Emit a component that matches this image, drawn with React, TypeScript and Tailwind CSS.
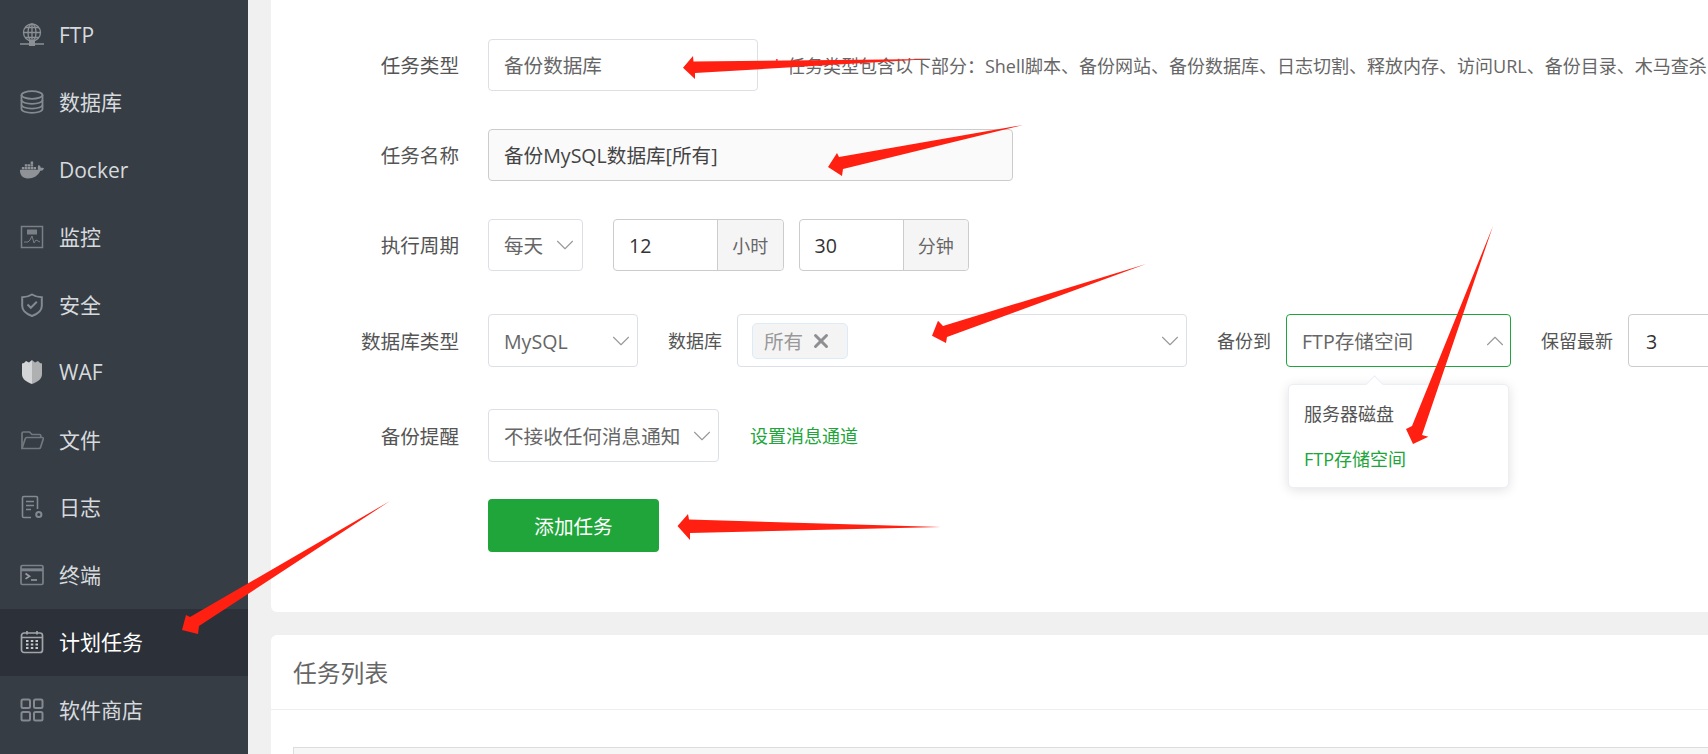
import { ChevronDown, ChevronUp, X } from "lucide-react";
import { FaDocker } from "react-icons/fa";
import type { ReactNode } from "react";

const font = "font-['Open_Sans','Noto_Sans_CJK_SC',sans-serif]";

function Ftp() {
  return (
    <svg viewBox="0 0 24 24" className="h-[24px] w-[24px]" fill="none" stroke="#8b9095" strokeWidth="1.300">
      <circle cx="12" cy="9.500" r="8.500" />
      <ellipse cx="12" cy="9.500" rx="4" ry="8.500" />
      <path d="M12 1v17M3.500 9.500h17M5 4.500h14M5 14.500h14" />
      <path d="M0 21h24" strokeWidth="1.500" />
      <rect x="9" y="18" width="6" height="5" fill="#8b9095" stroke="none" />
    </svg>
  );
}

function Db() {
  return (
    <svg viewBox="0 0 24 24" className="h-[24px] w-[24px]" fill="none" stroke="#858a90" strokeWidth="1.800">
      <ellipse cx="12" cy="5" rx="10.500" ry="3.800" />
      <path d="M1.500 5v14c0 2.200 4.700 3.800 10.500 3.800s10.500-1.600 10.500-3.800V5" />
      <path d="M1.500 10c0 2.200 4.700 3.800 10.500 3.800s10.500-1.600 10.500-3.800M1.500 14.800c0 2.200 4.700 3.800 10.500 3.800s10.500-1.600 10.500-3.800" />
    </svg>
  );
}

function Monitor() {
  return (
    <svg viewBox="0 0 24 24" className="h-[24px] w-[24px]" fill="none" stroke="#7b8086" strokeWidth="1.500">
      <rect x="1.500" y="1.500" width="21" height="21" />
      <rect x="7" y="4.500" width="10" height="5" fill="#7b8086" stroke="none" />
      <path d="M4 17h4l2-2 2-4 2 7 2-3 4 2" strokeWidth="1" />
    </svg>
  );
}

function Shield() {
  return (
    <svg viewBox="0 0 24 24" className="h-[24px] w-[24px]" fill="none" stroke="#858a90" strokeWidth="2">
      <path d="M12 1.500c3 1.800 6 2.700 9.800 2.800v8.700c0 4.400-3.800 7.800-9.800 10-6-2.200-9.800-5.600-9.800-10V4.300C6 4.200 9 3.300 12 1.500z" />
      <path d="M7.500 11.500l3.300 3.300 6-6" />
    </svg>
  );
}

function Waf() {
  return (
    <svg viewBox="0 0 24 24" className="h-[24px] w-[24px]">
      <path d="M12 0l3 2.500 3-1.500 2 2 2 .5v11c0 4.500-4.500 7.500-10 9.500z" fill="#aeb0b2" />
      <path d="M12 0L9 2.500 6 1 4 3l-2 .5v11c0 4.500 4.500 7.500 10 9.500z" fill="#d4d5d6" />
    </svg>
  );
}

function Folder() {
  return (
    <svg viewBox="0 0 24 24" className="h-[24px] w-[24px]" fill="none" stroke="#73787e" strokeWidth="1.700">
      <path d="M2 20.500V5.500C2 4.500 2.700 4 3.500 4h6l2.500 2.500h7.500c.8 0 1.300.5 1.300 1.300V9.500" />
      <path d="M2 20.500l3.300-10c.2-.7.7-1 1.400-1h15.600c.8 0 1.200.6 1 1.300l-2.800 8.700c-.2.700-.7 1-1.400 1z" />
    </svg>
  );
}

function Log() {
  return (
    <svg viewBox="0 0 24 24" className="h-[24px] w-[24px]" fill="none" stroke="#858a90" strokeWidth="1.600">
      <path d="M11 22.500H3.800c-.7 0-1.300-.6-1.300-1.300V2.800c0-.7.600-1.300 1.300-1.300h12.400c.7 0 1.300.6 1.300 1.300V14" />
      <path d="M6 6.500h8M6 10.500h8M6 14.500h5" />
      <circle cx="18.800" cy="19.500" r="2.600" strokeWidth="2" />
    </svg>
  );
}

function Terminal() {
  return (
    <svg viewBox="0 0 24 24" className="h-[24px] w-[24px]" fill="none" stroke="#7d8288" strokeWidth="1.700">
      <rect x="1" y="2.500" width="22" height="19" rx="1.500" />
      <path d="M1 6.800h22" strokeWidth="3" />
      <path d="M5.500 10.500l4 2.700-4 2.700M11 17h6" stroke="#9a9ea3" />
    </svg>
  );
}

function Calendar() {
  return (
    <svg viewBox="0 0 24 24" className="h-[24px] w-[24px]" fill="none" stroke="#a2a5a9" strokeWidth="1.700">
      <rect x="1.500" y="3" width="21" height="19.500" rx="2.500" />
      <path d="M1.500 7.500h21M7 1v3.500M17 1v3.500" />
      <path d="M6 11h2.500M10.800 11h2.500M15.500 11h2.500M6 14.500h2.500M10.800 14.500h2.500M15.500 14.500h2.500M6 18h2.500M10.800 18h2.500M15.500 18h2.500" strokeWidth="2.200" stroke="#c6c8ca" />
    </svg>
  );
}

function Store() {
  return (
    <svg viewBox="0 0 24 24" className="h-[24px] w-[24px]" fill="none" stroke="#858a90" strokeWidth="2">
      <rect x="1.500" y="1.500" width="8.500" height="8.500" rx="1.500" />
      <rect x="14" y="1.500" width="8.500" height="8.500" rx="1.500" />
      <rect x="1.500" y="14" width="8.500" height="8.500" rx="1.500" />
      <rect x="14" y="14" width="8.500" height="8.500" rx="1.500" />
    </svg>
  );
}

const menu: { name: string; icon: ReactNode; active?: boolean }[] = [
  { name: "FTP", icon: <Ftp /> },
  { name: "数据库", icon: <Db /> },
  { name: "Docker", icon: <FaDocker className="text-[24px] text-[#8f9398]" /> },
  { name: "监控", icon: <Monitor /> },
  { name: "安全", icon: <Shield /> },
  { name: "WAF", icon: <Waf /> },
  { name: "文件", icon: <Folder /> },
  { name: "日志", icon: <Log /> },
  { name: "终端", icon: <Terminal /> },
  { name: "计划任务", icon: <Calendar />, active: true },
  { name: "软件商店", icon: <Store /> },
];

function Sidebar() {
  return (
    <aside className="w-[248px] shrink-0 bg-[#363d45] pt-px">
      {menu.map((item) => (
        <div
          key={item.name}
          className={
            item.active
              ? "flex h-[67.5px] items-center gap-[15px] bg-[#2c3038] pl-[20px] text-[21px] text-white"
              : "flex h-[67.5px] items-center gap-[15px] pl-[20px] text-[21px] text-[#d6dadd]"
          }
        >
          <span className="flex w-[24px] shrink-0 items-center justify-center">{item.icon}</span>
          <span className="pt-px">{item.name}</span>
        </div>
      ))}
    </aside>
  );
}

function Label({ children }: { children: ReactNode }) {
  return <div className="mr-[29px] w-[188px] shrink-0 pt-[2px] text-right text-[#555]">{children}</div>;
}

function Inline({ children, className }: { children: ReactNode; className: string }) {
  return <div className={`shrink-0 pt-[2px] text-[18px] whitespace-nowrap text-[#555] ${className}`}>{children}</div>;
}

function Select({ text, width, pr, height }: { text: string; width: string; pr: string; height: string }) {
  return (
    <div className={`flex shrink-0 items-center justify-between rounded-[4px] border border-[#dcdfe6] bg-white pl-[15px] text-[#666] ${height} ${width} ${pr}`}>
      <span className="pt-[2px] whitespace-nowrap">{text}</span>
      <ChevronDown size={30} strokeWidth={0.9} className="shrink-0 text-[#999]" />
    </div>
  );
}

function TimeInput({ value, unit }: { value: string; unit: string }) {
  return (
    <div className="flex h-[52px] w-[170.5px] shrink-0 rounded-[4px] border border-[#ccc] bg-white">
      <div className="flex w-[103px] items-center pt-[2px] pl-[15px] text-[#333]">{value}</div>
      <div className="flex flex-1 items-center justify-center rounded-r-[4px] border-l border-[#ccc] bg-[#f5f5f5] pt-[2px] text-[18px] text-[#666]">
        {unit}
      </div>
    </div>
  );
}

// red marker arrows painted on top of the screenshot
function Arrows() {
  return (
    <svg className="pointer-events-none absolute top-0 left-0 z-20 h-[754px] w-[1708px]" viewBox="0 0 1708 754" fill="#ff2011">
      <polygon points="683,67.700 693,56 693.500,61.500 931,59 695,73 695,79" />
      <polygon points="828,167 837,153 839,157 1023,125 843,169 842,176" />
      <polygon points="932,335.700 938,320.700 943,326 1146,264 947,337 946,343" />
      <polygon points="1413,444 1406,429 1412,426 1493,226 1422,435 1428.400,436.700" />
      <polygon points="182,630 186,615 190,617 390,501 199,626 198,634" />
      <polygon points="677.500,526 688,514 689,519.500 941,527 690,533 690,540" />
    </svg>
  );
}

function Form() {
  return (
    <section className="rounded-b-[6px] bg-white pt-[39px] pb-[60px] text-[19.6px]">
      <div className="mb-[38px] flex h-[52px] items-center">
        <Label>任务类型</Label>
        <div className="flex h-[52px] w-[270px] shrink-0 items-center rounded-[4px] border border-[#dcdfe6] pt-[2px] pl-[15px] text-[#666]">备份数据库</div>
        <div className="ml-[14px] pt-[2px] whitespace-nowrap text-[18px] text-[#666]">
          <span className="mr-[5px] text-red-500">*</span>
          任务类型包含以下部分：Shell脚本、备份网站、备份数据库、日志切割、释放内存、访问URL、备份目录、木马查杀
        </div>
      </div>

      <div className="mb-[38px] flex h-[52px] items-center">
        <Label>任务名称</Label>
        <div className="flex h-[52px] w-[525px] shrink-0 items-center rounded-[4px] border border-[#ccc] bg-[#fafafa] pt-[2px] pl-[15px] text-[#444]">备份MySQL数据库[所有]</div>
      </div>

      <div className="mb-[43px] flex h-[52px] items-center">
        <Label>执行周期</Label>
        <Select text="每天" width="w-[95px]" pr="pr-[2px]" height="h-[52px]" />
        <div className="ml-[30px] flex gap-[15px]">
          <TimeInput value="12" unit="小时" />
          <TimeInput value="30" unit="分钟" />
        </div>
      </div>

      <div className="mb-[42px] flex h-[53px] items-center">
        <Label>数据库类型</Label>
        <Select text="MySQL" width="w-[150px]" pr="pr-[1px]" height="h-[53px]" />
        <Inline className="ml-[30px] w-[55px]">数据库</Inline>
        <div className="ml-[14px] flex h-[53px] w-[450px] shrink-0 items-center justify-between rounded-[4px] border border-[#dcdfe6] pr-[1px] pl-[14px]">
          <div className="flex h-[36px] w-[96px] items-center gap-[7px] rounded-[5px] border border-[#dcebfa] bg-[#f4f4f5] pl-[11px] text-[#999]">
            <span className="pt-[2px]">所有</span>
            <X size={22} strokeWidth={3.200} className="text-[#8e8e93]" />
          </div>
          <ChevronDown size={30} strokeWidth={0.9} className="text-[#999]" />
        </div>
        <Inline className="ml-[30px] w-[54px]">备份到</Inline>
        <div className="relative ml-[15px] h-[53px] w-[225px] shrink-0">
          <div className="flex h-full items-center justify-between rounded-[4px] border border-[#20a53a] pr-0 pl-[15px] text-[#666]">
            <span className="pt-[2px]">FTP存储空间</span>
            <ChevronUp size={30} strokeWidth={0.9} className="text-[#999]" />
          </div>
          <div className="absolute top-[69.500px] left-[2px] z-10 h-[104px] w-[221px] rounded-[5px] border border-[#ebeef5] bg-white pt-[7px] text-[18px] text-[#555] shadow-[0_2px_12px_rgba(0,0,0,0.12)]">
            <div className="absolute -top-[7px] left-[79px] h-[13px] w-[13px] rotate-45 border-t border-l border-[#ebeef5] bg-white" />
            <div className="flex h-[45px] items-center pl-[15px]">服务器磁盘</div>
            <div className="flex h-[45px] items-center pl-[15px] text-[#20a53a]">FTP存储空间</div>
          </div>
        </div>
        <Inline className="ml-[30px] w-[73px]">保留最新</Inline>
        <div className="ml-[14px] flex h-[53px] w-[200px] shrink-0 items-center rounded-[4px] border border-[#ccc] pt-[2px] pl-[17px] text-[#333]">3</div>
      </div>

      <div className="mb-[37px] flex h-[53px] items-center">
        <Label>备份提醒</Label>
        <Select text="不接收任何消息通知" width="w-[231px]" pr="pr-[1px]" height="h-[53px]" />
        <a className="ml-[31px] pt-[1px] text-[18px] text-[#20a53a]">设置消息通道</a>
      </div>

      <div className="flex">
        <div className="w-[217px] shrink-0" />
        <button className="h-[53px] w-[171px] rounded-[4px] bg-[#20a53a] pt-[2px] text-white">添加任务</button>
      </div>
    </section>
  );
}

export default function App() {
  return (
    <div className={`relative flex h-screen w-screen overflow-hidden bg-[#f0f0f0] ${font}`}>
      <Sidebar />
      <main className="min-w-0 flex-1 pl-[23px]">
        <div className="w-[1500px]">
          <Form />
          <section className="mt-[23px] rounded-t-[6px] bg-white">
            <h2 className="flex h-[75px] items-center border-b border-[#eee] pt-[3px] pl-[22px] text-[23.800px] font-normal text-[#666]">任务列表</h2>
            <div className="px-[22px] pt-[37px]">
              <div className="h-[60px] border border-[#ddd] bg-[#f6f6f6]" />
            </div>
          </section>
        </div>
      </main>
      <Arrows />
    </div>
  );
}
